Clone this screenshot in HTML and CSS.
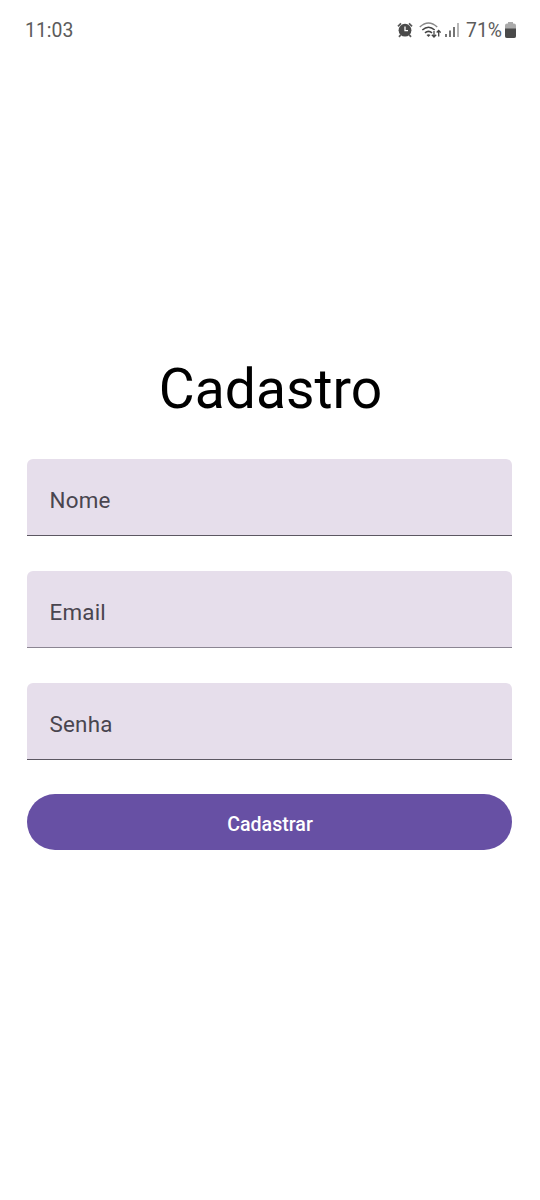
FILE: index.html
```html
<!DOCTYPE html>
<html lang="pt-BR">
<head>
<meta charset="utf-8">
<title>Cadastro</title>
<link rel="stylesheet" href="styles.css">
</head>
<body>
<header class="status">
  <span class="time">11:03</span>
  <div class="indicators">
    <svg class="alarm" width="16" height="16" viewBox="0 0 16 16"><circle cx="8" cy="8.200" r="6.400" fill="#4a4a4a"/><path d="M1 4.300 4 1.300M15 4.300 12 1.300M4 12.500l-2 2.300M12 12.500l2 2.300" stroke="#5a5a5a" stroke-width="1.800"/><path d="M8 4.500v4.200h3" fill="none" stroke="#fff" stroke-width="1.300"/></svg>
    <svg class="wifi" width="22" height="18" viewBox="0 0 22 18"><path d="M.8 6q8.700-8 17.400 0" fill="none" stroke="#888" stroke-width="1.500"/><path d="M3.300 9q6.200-5.500 12.400 0M6 11.800q3.500-3 7 0" fill="none" stroke="#444" stroke-width="1.600"/><path d="m7.500 14 2 2 2-2q-2-1.500-4 0z" fill="#444"/><path d="M15 10v6m-2.200-2.200L15 16l2.200-2.200M19.700 15.500v-6m-2 2 2-2 2 2" fill="none" stroke="#444" stroke-width="1.300"/></svg>
    <svg class="signal" width="14" height="14" viewBox="0 0 14 14"><path d="M1 11v3M5 7.500V14M9 4v10" stroke="#666" stroke-width="1.800"/><path d="M13 0v14" stroke="#b0b0b0" stroke-width="1.800"/></svg>
    <span class="charge">71%</span>
    <svg class="battery" width="11" height="16" viewBox="0 0 11 16"><path d="M3 0h5v1.500h1q2 0 2 2V14q0 2-2 2H2q-2 0-2-2V3.500q0-2 2-2h1z" fill="#aaa"/><path d="M0 6.500h11V14q0 2-2 2H2q-2 0-2-2z" fill="#4a4a4a"/></svg>
  </div>
</header>
<main class="form">
  <h1 class="title">Cadastro</h1>
  <label class="field">Nome</label>
  <label class="field field-soft">Email</label>
  <label class="field">Senha</label>
  <button class="submit">Cadastrar</button>
</main>
</body>
</html>
```
FILE: styles.css
```css
body { margin: 0; background: #fff; font-family: Roboto, sans-serif; }
.status { height: 60px; box-sizing: border-box; padding: 0 24px 0 25px; display: flex; align-items: center; justify-content: space-between; color: #5c5c5c; font-size: 19.4px; }
.indicators { display: flex; align-items: center; }
.wifi { margin-left: 6px; }
.signal { margin-left: 4px; }
.charge { margin-left: 7px; }
.battery { margin-left: 3px; }
.form { padding: 293px 28px 0 27px; display: flex; flex-direction: column; }
.title { margin: 0 0 34px; height: 72px; line-height: 72px; text-align: center; font-weight: 400; font-size: 55.2px; color: #000; padding-left: 2px; }
.field { height: 77px; box-sizing: border-box; margin-bottom: 35px; padding: 4px 22.5px 0; line-height: 74px; border-bottom: 1px solid #5c5762; border-radius: 6px 6px 0 0; background: #e6deeb; color: #49454f; font-size: 22.4px; letter-spacing: .2px; }
.field-soft { border-bottom-color: #8b8592; }
.submit { height: 56px; margin-top: -1px; border: 0; border-radius: 28px; background: #6750a4; color: #fff; font: 500 19.6px Roboto, sans-serif; padding: 4px 0 0 1px; }
```
